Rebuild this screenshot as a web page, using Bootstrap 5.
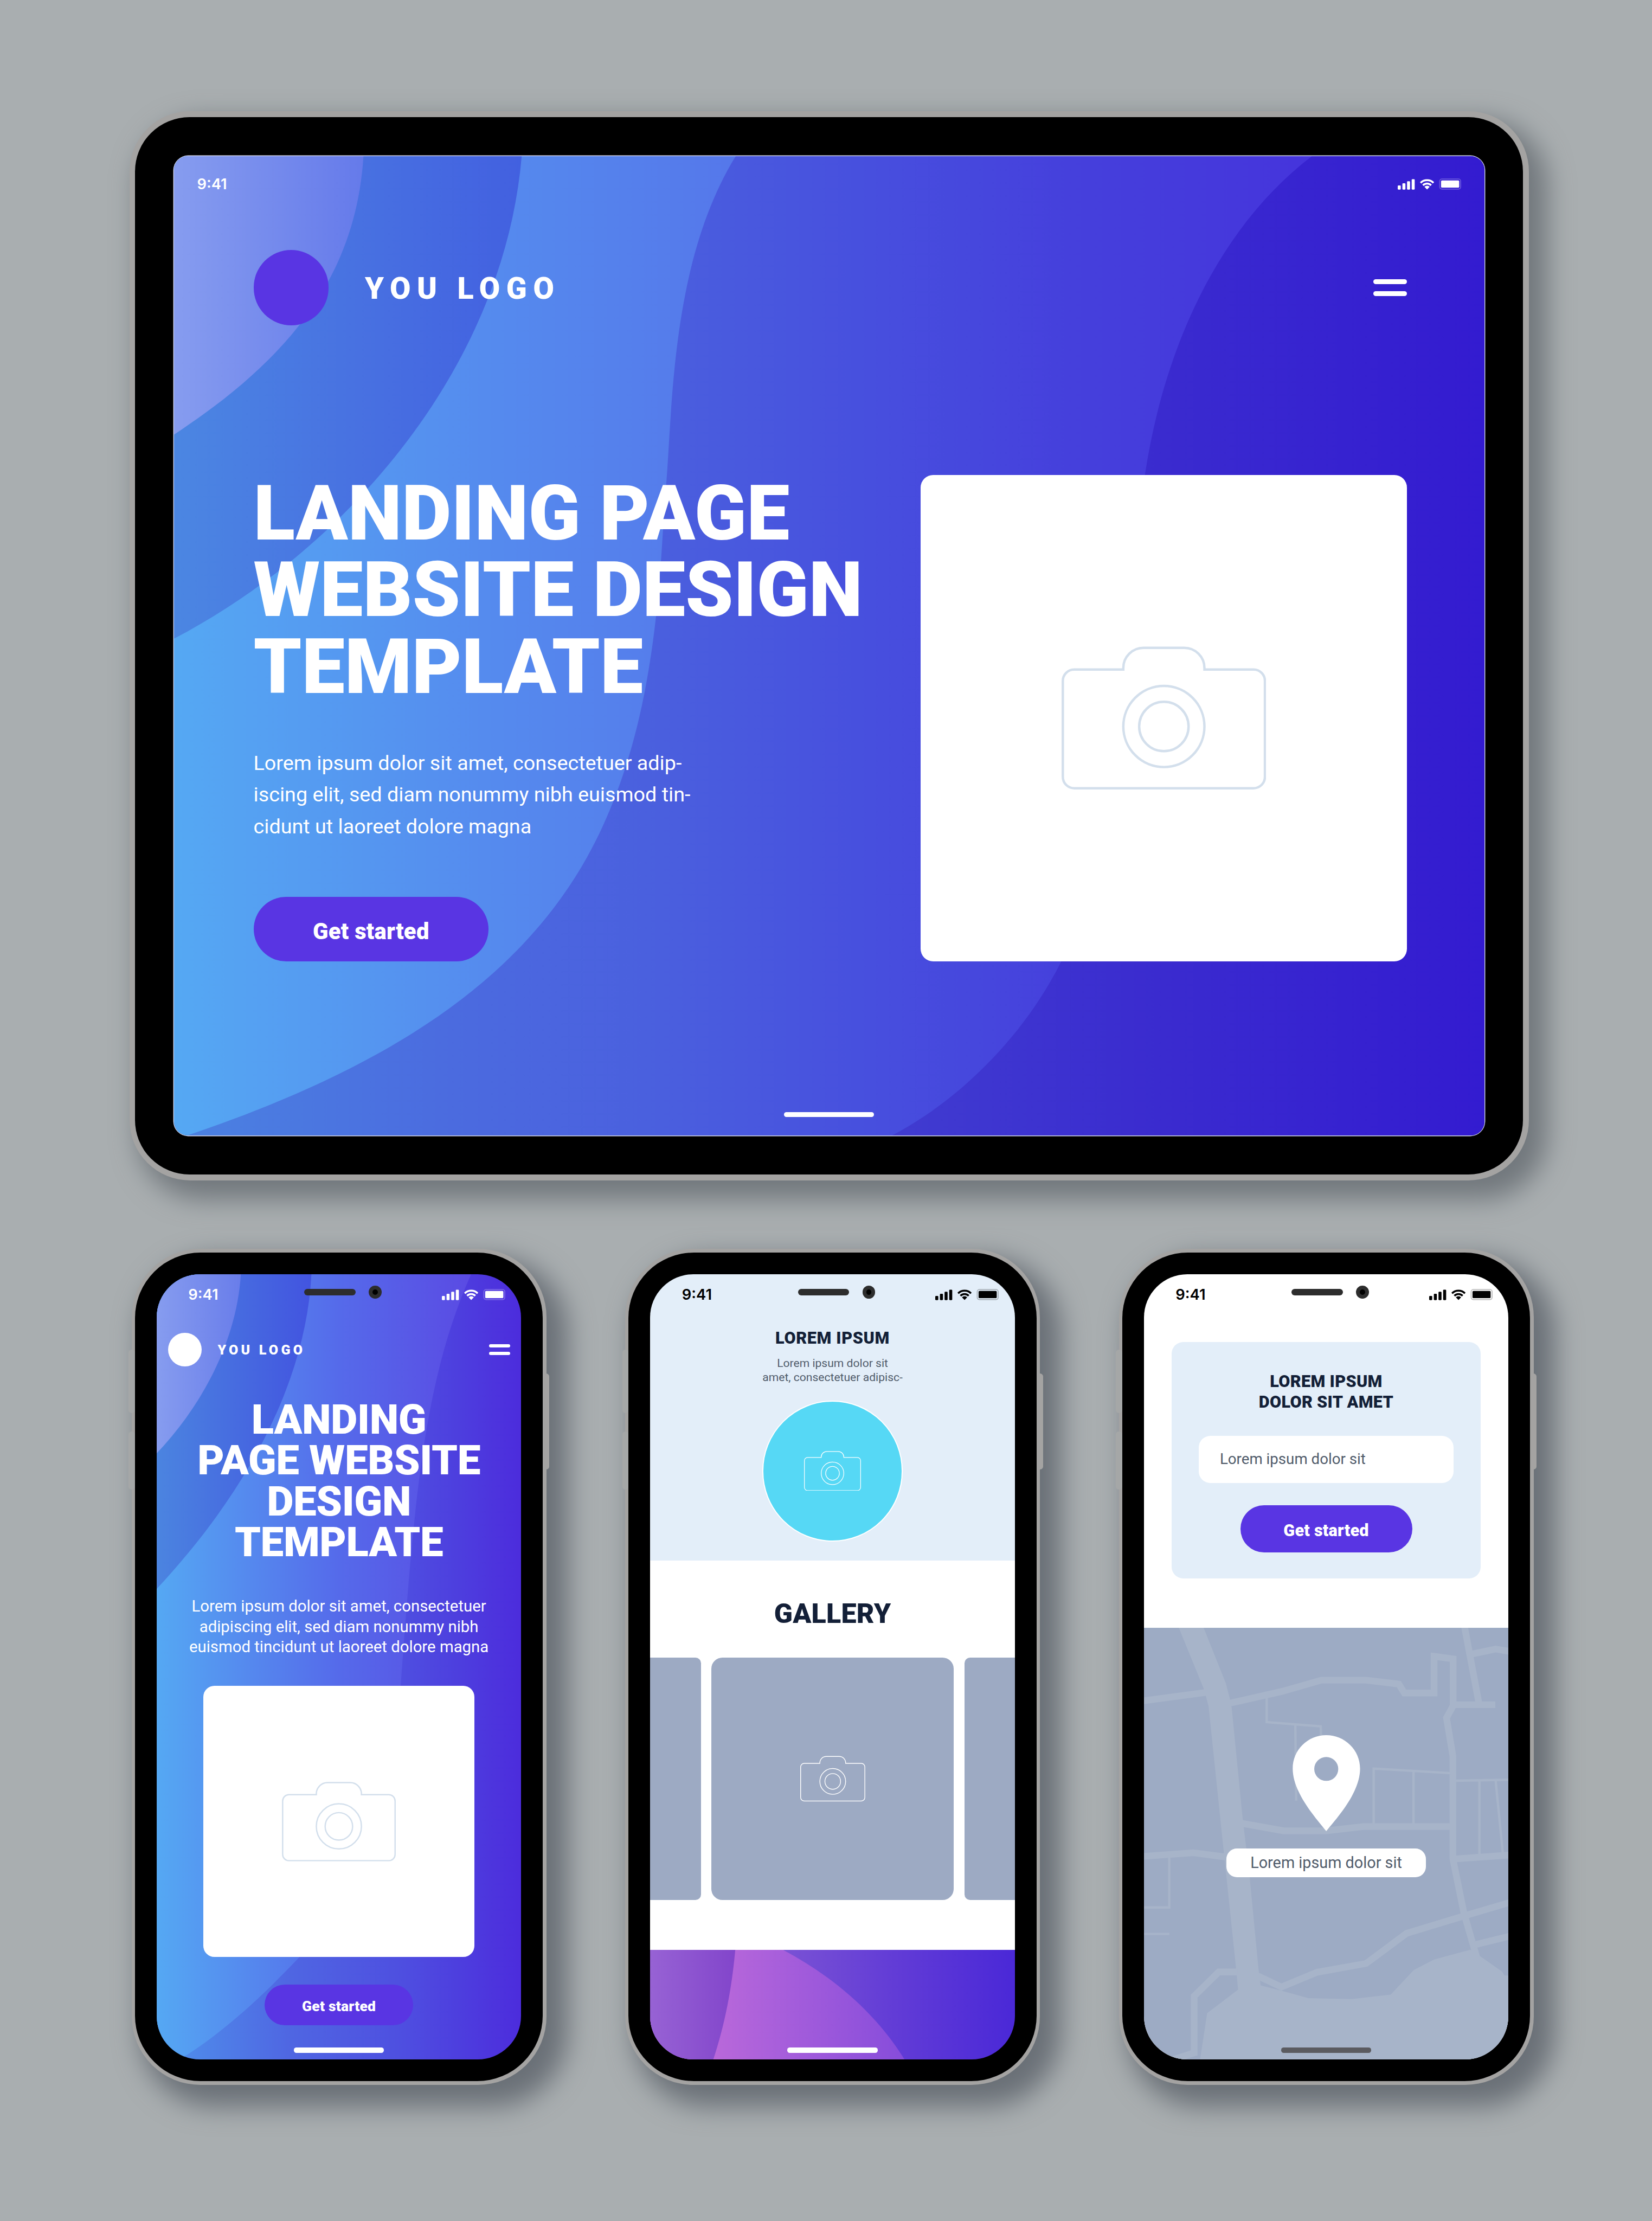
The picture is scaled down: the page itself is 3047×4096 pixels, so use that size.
<!DOCTYPE html>
<html lang="en">
<head>
<meta charset="utf-8">
<meta name="viewport" content="width=device-width, initial-scale=1">
<title>Landing page template</title>
<link href="https://cdn.jsdelivr.net/npm/bootstrap@5.3.0/dist/css/bootstrap.min.css" rel="stylesheet">
<style>
  /* one rem is a fixed share of the window width, so the board scales as a whole */
  html { font-size: calc(100vw / 327.8); }
  body { font-family: Roboto, "Liberation Sans", sans-serif; background: #a9aeb0; color: #fff; line-height: 1; }
  .board { width: 327.8rem; height: 440.6rem; padding-top: 22.1rem; }

  /* devices */
  .device { background: #a4a3a2; box-shadow: 2.6rem 2.7rem 5rem 1rem #72787d; }
  .bezel { background: #000; width: 100%; height: 100%; }
  .screen { width: 100%; height: 100%; }
  .tablet { width: 277.7rem; height: 212.1rem; margin-left: 25.7rem; padding: 1.15rem 1.15rem 1.2rem 1.1rem; border-radius: 12rem; }
  .tablet .bezel { padding: 7.7rem; border-radius: 10.8rem; }
  .tablet .screen { border-radius: 2.8rem; box-shadow: 0 0 0 .15rem #d5d9f2; }
  .phones { margin: 13.6rem 0 0 26.1rem; gap: 15.65rem; }
  .phone { width: 82.3rem; height: 165.8rem; padding: .67rem; border-radius: 13.6rem; box-shadow: 2.9rem 3rem 5.2rem 1.2rem #6a7077; }
  .phone .bezel { padding: 4.3rem; border-radius: 13rem; }
  .phone .screen { border-radius: 8.6rem; }
  .side-key { right: -.62rem; top: 24.7rem; width: 1.3rem; height: 19.1rem; border-radius: .6rem; background: #a4a3a2; }
  .side-key-l { left: -.55rem; width: 1.2rem; border-radius: .6rem; background: #a5a7a7; }
  .key-a { top: 20rem; height: 12.6rem; }
  .key-b { top: 36.2rem; height: 11.5rem; }
  .backdrop { z-index: -1; }
  .screen { isolation: isolate; }

  /* status bar */
  .status { font-family: Inter, "Liberation Sans", sans-serif; font-weight: 600; font-size: 2.95rem; height: 3rem; flex: none; }
  .status svg { width: 12.6rem; height: 2.3rem; }
  .tablet .status { margin: 4.1rem 4.6rem 0 4.6rem; }
  .phone .status { margin: 2.58rem 3.2rem 0 6.3rem; }
  .notch { left: 29.3rem; top: 2.3rem; gap: 2.6rem; }
  .speaker { width: 10.2rem; height: 1.34rem; background: #2d2d2d; }
  .lens { width: 2.56rem; height: 2.56rem; border: .82rem solid #2d2d2d; background: #000; }
  .home-bar { width: 17.9rem; height: 1rem; border-radius: .5rem; background: #fff; }

  /* brand row */
  .logo-dot { border-radius: 50%; flex: none; }
  .brand-text { font-weight: 900; }
  .burger span { display: block; background: #fff; border-radius: 1rem; }
  .tablet .brand-row { margin: 11.6rem 15.4rem 0 15.8rem; height: 14.9rem; }
  .tablet .logo-dot { width: 14.9rem; height: 14.9rem; background: #5935e3; }
  .tablet .brand-text { font-size: 6rem; letter-spacing: 1.26rem; margin-left: 7.2rem; padding-top: .4rem; }
  .tablet .burger span { width: 6.6rem; height: .95rem; }
  .tablet .burger { gap: 1.4rem; }
  .phone .brand-row { margin: 6.05rem 2.24rem 0 2.27rem; height: 6.7rem; }
  .phone .logo-dot { width: 6.7rem; height: 6.7rem; background: #fff; }
  .phone .brand-text { font-size: 2.7rem; letter-spacing: .56rem; margin-left: 3.15rem; padding-top: .2rem; }
  .phone .burger span { width: 4.2rem; height: .66rem; }
  .phone .burger { gap: .86rem; }

  /* hero */
  .hero-row { margin: 29.65rem 15.4rem 0 15.8rem; height: 96.5rem; }
  .photo-card { background: #fff; }
  .photo-card svg { color: #d3dfec; }
  .tablet .photo-card { width: 96.5rem; height: 96.5rem; border-radius: 2.5rem; }
  .tablet .photo-card svg { width: 40.6rem; height: 28.4rem; }
  .tablet h1 { font-size: 15.2rem; line-height: 15.22rem; font-weight: 900; letter-spacing: .0005em; }
  .tablet .blurb { font-size: 4.06rem; line-height: 6.33rem; margin-top: 8.35rem; }
  .cta { --bs-btn-bg: #5935e3; --bs-btn-border-color: #5935e3; --bs-btn-hover-bg: #4a28cf; --bs-btn-color: #fff; --bs-btn-hover-color: #fff; --bs-btn-padding-x: 0; --bs-btn-padding-y: 0; --bs-btn-border-width: 0; font-weight: 900; letter-spacing: .007em; line-height: 1; white-space: nowrap; flex: none; }
  .tablet .cta { width: 46.65rem; height: 12.76rem; font-size: 4.5rem; padding-top: .9rem; }
  .tablet .home-bar { margin-bottom: 3.7rem; }

  .phone h1 { font-size: 8.2rem; line-height: 8.13rem; font-weight: 900; letter-spacing: -.005em; margin-top: 6.53rem; }
  .phone .blurb { font-size: 3.16rem; line-height: 4.07rem; margin-top: 6.54rem; }
  .phone .photo-card { width: 53.75rem; height: 53.8rem; border-radius: 2.2rem; margin-top: 5.59rem; flex: none; }
  .phone .photo-card svg { width: 22.6rem; height: 15.8rem; }
  .cta-s { width: 29.5rem; height: 8.1rem; font-size: 2.85rem; padding-top: .6rem; margin-top: 5.44rem; }
  .phone .home-bar { margin-bottom: 1.38rem; }
  .home-dark { background: #5b5b60; }

  /* second phone */
  .ink { color: #131f37; }
  .slate { color: #515c6b; }
  .ice { background: #e3eef9; }
  .intro { height: 56.83rem; flex: none; }
  .intro h2 { font-size: 3.3rem; line-height: 4rem; font-weight: 900; letter-spacing: .02em; margin-top: 5.07rem; }
  .intro p { font-size: 2.27rem; line-height: 2.8rem; margin-top: 1.64rem; }
  .avatar-ring { width: 27.95rem; height: 27.95rem; border: .27rem solid #fff; background: #56d8f5; margin-top: 3.2rem; flex: none; }
  .avatar-ring svg { width: 11.3rem; height: 7.9rem; }
  .gallery { background: #fff; height: 77.3rem; flex: none; }
  .gallery h2 { font-size: 5.4rem; line-height: 5.4rem; font-weight: 900; letter-spacing: .005em; margin-top: 7.9rem; }
  .tiles { gap: 2.1rem; margin-top: 6rem; }
  .tile { width: 48.1rem; height: 48.1rem; border-radius: 2.2rem; background: #9daac3; flex: none; }
  .tile svg { width: 12.9rem; height: 9.1rem; }
  .tile-edge { width: 20rem; border-radius: 1.1rem; }

  /* third phone */
  .form-box { width: 61.4rem; height: 46.9rem; border-radius: 2.3rem; margin-top: 7.95rem; padding-top: 5.78rem; flex: none; }
  .form-box h2 { font-size: 3.3rem; line-height: 4.04rem; font-weight: 900; letter-spacing: .01em; }
  .field { width: 50.6rem; height: 9.32rem; border-radius: 2.3rem; background: #fff; margin-top: 4.72rem; padding-left: 4.2rem; font-size: 2.98rem; }
  .cta-m { width: 34.1rem; height: 9.34rem; font-size: 3.3rem; padding-top: .7rem; margin-top: 4.5rem; }
  .map { background: #9dabc4; margin-top: 9.74rem; isolation: isolate; }
  .pin-label { width: 39.6rem; height: 5.8rem; border-radius: 2.1rem; background: #fff; margin-top: 43.76rem; font-size: 3.1rem; flex: none; }
</style>
</head>
<body class="m-0">

<svg class="d-none" aria-hidden="true">
  <symbol id="camera" viewBox="0 0 406 284">
    <g fill="none" stroke="currentColor" stroke-width="4.8">
      <path d="M25 46H122.5V43A40 40 0 0 1 162.5 3H243.5A40 40 0 0 1 283.5 43V46H381A22.5 22.5 0 0 1 403.5 68.5V259A22.5 22.5 0 0 1 381 281.5H25A22.5 22.5 0 0 1 2.5 259V68.5A22.5 22.5 0 0 1 25 46Z"/>
      <circle cx="203" cy="159" r="80.5"/>
      <circle cx="203" cy="159" r="49"/>
    </g>
  </symbol>
  <symbol id="signals" viewBox="0 0 126 23">
    <g fill="currentColor">
      <rect x="0" y="14" width="6" height="8.3" rx="1.5"/>
      <rect x="9.3" y="9.7" width="6" height="12.6" rx="1.5"/>
      <rect x="18.5" y="5.7" width="6" height="16.6" rx="1.5"/>
      <rect x="27.7" y="1.5" width="6" height="20.8" rx="1.5"/>
      <path d="M58.2 22L53 16.6A7.4 7.4 0 0 1 63.4 16.6Z"/>
      <rect x="86" y="4" width="36" height="14.4" rx="2"/>
    </g>
    <path d="M45.4 8.8A18 18 0 0 1 71 8.8M50.1 13.6A11.4 11.4 0 0 1 66.3 13.6" fill="none" stroke="currentColor" stroke-width="3.8"/>
    <rect x="83.3" y="1.2" width="41.6" height="20" rx="4.5" fill="none" stroke="currentColor" stroke-opacity=".25" stroke-width="2"/>
  </symbol>
</svg>

<main class="board d-flex flex-column align-items-start overflow-hidden">

  <section class="device tablet">
    <div class="bezel">
      <div class="screen position-relative overflow-hidden d-flex flex-column">
        <svg class="backdrop position-absolute top-0 start-0 w-100 h-100" viewBox="345 309.5 2601 1944" preserveAspectRatio="none">
          <defs>
            <linearGradient id="tBase" gradientUnits="userSpaceOnUse" x1="345" x2="2946" y1="0" y2="0">
              <stop offset="0" stop-color="#4b82e1"/><stop offset=".21" stop-color="#4b6bdf"/><stop offset=".37" stop-color="#4a5fde"/><stop offset=".52" stop-color="#4750de"/><stop offset=".68" stop-color="#4540dc"/><stop offset=".87" stop-color="#4534dc"/><stop offset="1" stop-color="#432edc"/>
            </linearGradient>
            <linearGradient id="tDark" gradientUnits="userSpaceOnUse" x1="1760" x2="2946" y1="0" y2="0">
              <stop offset="0" stop-color="#403cd0"/><stop offset=".45" stop-color="#3a2bcf"/><stop offset="1" stop-color="#331bd0"/>
            </linearGradient>
            <linearGradient id="tLight" gradientUnits="userSpaceOnUse" x1="345" x2="1460" y1="0" y2="0">
              <stop offset="0" stop-color="#55a8f3"/><stop offset=".55" stop-color="#558bee"/><stop offset="1" stop-color="#5577ea"/>
            </linearGradient>
            <linearGradient id="tMid" gradientUnits="userSpaceOnUse" x1="345" x2="1035" y1="0" y2="0">
              <stop offset="0" stop-color="#4b86e2"/><stop offset=".5" stop-color="#4872e1"/><stop offset="1" stop-color="#4260e0"/>
            </linearGradient>
            <linearGradient id="tPale" gradientUnits="userSpaceOnUse" x1="345" x2="721" y1="0" y2="0">
              <stop offset="0" stop-color="#869cef"/><stop offset="1" stop-color="#657aea"/>
            </linearGradient>
          </defs>
          <path fill="url(#tBase)" d="M340 300H2950V2260H340Z"/>
          <path fill="url(#tDark)" d="M2604 309C2418 450 2310 690 2272 941C2210 1350 2235 1640 2106 1907C2030 2060 1900 2185 1768 2254H2950V309Z"/>
          <path fill="url(#tLight)" d="M1460 309C1330 520 1335 810 1321 970C1308 1120 1310 1440 1165 1700C1030 1942 780 2115 368 2254H340V309Z"/>
          <path fill="url(#tMid)" d="M1035 309C1000 720 700 1080 345 1267V309Z"/>
          <path fill="url(#tPale)" d="M721 309C705 560 560 720 345 862V309Z"/>
        </svg>
        <div class="status d-flex justify-content-between align-items-center">
          <span>9:41</span><svg><use href="#signals"/></svg>
        </div>
        <header class="brand-row d-flex align-items-center">
          <span class="logo-dot"></span>
          <span class="brand-text">YOU LOGO</span>
          <div class="burger ms-auto d-flex flex-column"><span></span><span></span></div>
        </header>
        <div class="hero-row d-flex justify-content-between">
          <div class="d-flex flex-column align-items-start text-nowrap">
            <h1 class="m-0">LANDING PAGE<br>WEBSITE DESIGN<br>TEMPLATE</h1>
            <p class="blurb mb-0">Lorem ipsum dolor sit amet, consectetuer adip-<br>iscing elit, sed diam nonummy nibh euismod tin-<br>cidunt ut laoreet dolore magna</p>
            <button type="button" class="btn cta rounded-pill mt-auto">Get started</button>
          </div>
          <div class="photo-card d-flex align-items-center justify-content-center"><svg><use href="#camera"/></svg></div>
        </div>
        <div class="home-bar mt-auto mx-auto"></div>
      </div>
    </div>
  </section>

  <div class="phones d-flex">

    <section class="device phone position-relative flex-shrink-0">
      <span class="side-key position-absolute"></span><span class="side-key-l key-a position-absolute"></span><span class="side-key-l key-b position-absolute"></span>
      <div class="bezel position-relative">
        <div class="screen position-relative overflow-hidden d-flex flex-column">
          <svg class="backdrop position-absolute top-0 start-0 w-100 h-100" viewBox="311 2527.7 723.5 1559" preserveAspectRatio="none">
            <defs>
              <linearGradient id="pBase" gradientUnits="userSpaceOnUse" x1="350" x2="1034" y1="0" y2="0">
                <stop offset="0" stop-color="#4f8dea"/><stop offset=".33" stop-color="#4f66e2"/><stop offset=".65" stop-color="#4e4fe0"/><stop offset="1" stop-color="#4c2cdc"/>
              </linearGradient>
              <linearGradient id="pLight" gradientUnits="userSpaceOnUse" x1="311" x2="935" y1="0" y2="0">
                <stop offset="0" stop-color="#55a8f3"/><stop offset=".28" stop-color="#558aee"/><stop offset=".58" stop-color="#556aea"/><stop offset="1" stop-color="#5a4ae3"/>
              </linearGradient>
              <linearGradient id="pMid" gradientUnits="userSpaceOnUse" x1="311" x2="618" y1="0" y2="0">
                <stop offset="0" stop-color="#4b84e0"/><stop offset="1" stop-color="#4254e0"/>
              </linearGradient>
              <linearGradient id="pPale" gradientUnits="userSpaceOnUse" x1="311" x2="478" y1="0" y2="0">
                <stop offset="0" stop-color="#869cef"/><stop offset="1" stop-color="#697dea"/>
              </linearGradient>
            </defs>
            <path fill="url(#pBase)" d="M300 2520H1040V4100H300Z"/>
            <path fill="url(#pLight)" d="M935 2527C840 2740 822 2980 795 3344C780 3560 700 3770 594 3883C535 3945 450 4030 350 4090H300V2520Z"/>
            <path fill="url(#pMid)" d="M618 2527C608 2730 500 2950 311 3152V2520H618Z"/>
            <path fill="url(#pPale)" d="M478 2527C470 2660 400 2790 311 2883V2520H478Z"/>
          </svg>
          <div class="status d-flex justify-content-between align-items-center">
            <span>9:41</span><svg><use href="#signals"/></svg>
          </div>
          <header class="brand-row d-flex align-items-center">
            <span class="logo-dot"></span>
            <span class="brand-text">YOU LOGO</span>
            <div class="burger ms-auto d-flex flex-column"><span></span><span></span></div>
          </header>
          <div class="d-flex flex-column align-items-center text-center text-nowrap flex-grow-1">
            <h1 class="mb-0">LANDING<br>PAGE WEBSITE<br>DESIGN<br>TEMPLATE</h1>
            <p class="blurb mb-0">Lorem ipsum dolor sit amet, consectetuer<br>adipiscing elit, sed diam nonummy nibh<br>euismod tincidunt ut laoreet dolore magna</p>
            <div class="photo-card d-flex align-items-center justify-content-center"><svg><use href="#camera"/></svg></div>
            <button type="button" class="btn cta cta-s rounded-pill">Get started</button>
            <div class="home-bar mt-auto"></div>
          </div>
          <div class="notch position-absolute d-flex align-items-center"><span class="speaker rounded-pill"></span><span class="lens rounded-circle"></span></div>
        </div>
      </div>
    </section>

    <section class="device phone position-relative flex-shrink-0">
      <span class="side-key position-absolute"></span><span class="side-key-l key-a position-absolute"></span><span class="side-key-l key-b position-absolute"></span>
      <div class="bezel position-relative">
        <div class="screen position-relative overflow-hidden d-flex flex-column text-center">
          <div class="intro ice d-flex flex-column">
            <div class="status d-flex justify-content-between align-items-center text-black">
              <span>9:41</span><svg><use href="#signals"/></svg>
            </div>
            <h2 class="ink mb-0">LOREM IPSUM</h2>
            <p class="slate mb-0">Lorem ipsum dolor sit<br>amet, consectetuer adipisc-</p>
            <div class="avatar-ring rounded-circle mx-auto d-flex align-items-center justify-content-center"><svg><use href="#camera"/></svg></div>
          </div>
          <div class="gallery d-flex flex-column">
            <h2 class="ink mb-0">GALLERY</h2>
            <div class="tiles d-flex justify-content-center">
              <div class="tile tile-edge"></div>
              <div class="tile d-flex align-items-center justify-content-center"><svg><use href="#camera"/></svg></div>
              <div class="tile tile-edge"></div>
            </div>
          </div>
          <footer class="position-relative flex-grow-1 d-flex flex-column align-items-center">
            <svg class="backdrop position-absolute top-0 start-0 w-100 h-100" viewBox="1291 3869 723 218" preserveAspectRatio="none">
              <defs>
                <linearGradient id="fBase" gradientUnits="userSpaceOnUse" x1="1553" x2="2014" y1="0" y2="0">
                  <stop offset="0" stop-color="#7a52d4"/><stop offset=".5" stop-color="#613bd6"/><stop offset="1" stop-color="#4a28d7"/>
                </linearGradient>
                <linearGradient id="fPink" gradientUnits="userSpaceOnUse" x1="1417" x2="1795" y1="0" y2="0">
                  <stop offset="0" stop-color="#b968da"/><stop offset="1" stop-color="#864cdb"/>
                </linearGradient>
                <linearGradient id="fPlum" gradientUnits="userSpaceOnUse" x1="1291" x2="1460" y1="0" y2="0">
                  <stop offset="0" stop-color="#9762d4"/><stop offset="1" stop-color="#8245cb"/>
                </linearGradient>
              </defs>
              <path fill="url(#fBase)" d="M1290 3868H2016V4088H1290Z"/>
              <path fill="url(#fPink)" d="M1553 3868C1660 3925 1742 4000 1796 4088H1290V3868Z"/>
              <path fill="url(#fPlum)" d="M1460 3868C1453 3945 1440 4015 1416 4088H1290V3868Z"/>
            </svg>
            <div class="home-bar mt-auto"></div>
          </footer>
          <div class="notch position-absolute d-flex align-items-center"><span class="speaker rounded-pill"></span><span class="lens rounded-circle"></span></div>
        </div>
      </div>
    </section>

    <section class="device phone position-relative flex-shrink-0">
      <span class="side-key position-absolute"></span><span class="side-key-l key-a position-absolute"></span><span class="side-key-l key-b position-absolute"></span>
      <div class="bezel position-relative">
        <div class="screen bg-white position-relative overflow-hidden d-flex flex-column">
          <div class="status d-flex justify-content-between align-items-center text-black">
            <span>9:41</span><svg><use href="#signals"/></svg>
          </div>
          <div class="form-box ice mx-auto d-flex flex-column align-items-center text-center">
            <h2 class="ink mb-0">LOREM IPSUM<br>DOLOR SIT AMET</h2>
            <div class="field slate d-flex align-items-center">Lorem ipsum dolor sit</div>
            <button type="button" class="btn cta cta-m rounded-pill">Get started</button>
          </div>
          <div class="map position-relative flex-grow-1 d-flex flex-column align-items-center">
            <svg class="backdrop position-absolute top-0 start-0 w-100 h-100" viewBox="121.5 45 1261.5 1319" preserveAspectRatio="none">
              <g fill="#a7b4c9">
                <path d="M242 45L330 235L345 285L397 725L440 1085L447 1150L340 1222L315 1366H1385V1130L1360 1095L1280 1045L1250 1028L1125 1058L1055 1090L975 1165L840 1179L690 1176L597 1153L525 1137L518 1090L487 805L462 620L425 290L418 260L405 215L328 45Z"/>
                <path d="M1363 1107H1385V1135H1372Z"/>
              </g>
              <g fill="none" stroke="#a7b4c9" stroke-width="12.4">
                <path vector-effect="non-scaling-stroke" d="M118 268L340 242"/>
                <path vector-effect="non-scaling-stroke" d="M415 276L600 239L735 205H890L1003 217L1022 244H1125V132L1191 140V283L1168 320L1190 437V750L1228 915L1272 1050"/>
                <path vector-effect="non-scaling-stroke" d="M1191 280H1337M1230 40L1280 275M1256 125L1338 110L1386 117"/>
                <path vector-effect="non-scaling-stroke" d="M460 642L605 665H750L880 652H1190M118 743L293 732L404 745M1195 751L1386 739"/>
                <path vector-effect="non-scaling-stroke" d="M1386 884L1228 925L1030 978L890 1070L720 1097L597 1142L515 1108M1266 1013L1386 987"/>
                <path vector-effect="non-scaling-stroke" d="M445 1096H380L295 1170V1343L220 1364"/>
              </g>
              <g fill="none" stroke="#a7b4c9" stroke-width="4.4">
                <path vector-effect="non-scaling-stroke" d="M546 258V333L733 346L738 520M645 341L648 573M916 645V475L1185 489M1054 484V645"/>
                <path vector-effect="non-scaling-stroke" d="M1200 512L1386 509M1282 512V740M1338 512L1363 735M209 742V899H118M118 980H209"/>
              </g>
              <path fill="#fff" fill-rule="evenodd" d="M752 666C715 625 636 548 636 475C636 418 688 373 752 373C816 373 869 418 869 475C869 548 790 625 752 666Z"/>
              <ellipse cx="752" cy="476" rx="41.5" ry="36.5" fill="#9dabc4"/>
            </svg>
            <div class="pin-label slate d-flex align-items-center justify-content-center">Lorem ipsum dolor sit</div>
            <div class="home-bar home-dark mt-auto"></div>
          </div>
          <div class="notch position-absolute d-flex align-items-center"><span class="speaker rounded-pill"></span><span class="lens rounded-circle"></span></div>
        </div>
      </div>
    </section>

  </div>
</main>

<script src="https://cdn.jsdelivr.net/npm/bootstrap@5.3.0/dist/js/bootstrap.bundle.min.js"></script>
</body>
</html>
